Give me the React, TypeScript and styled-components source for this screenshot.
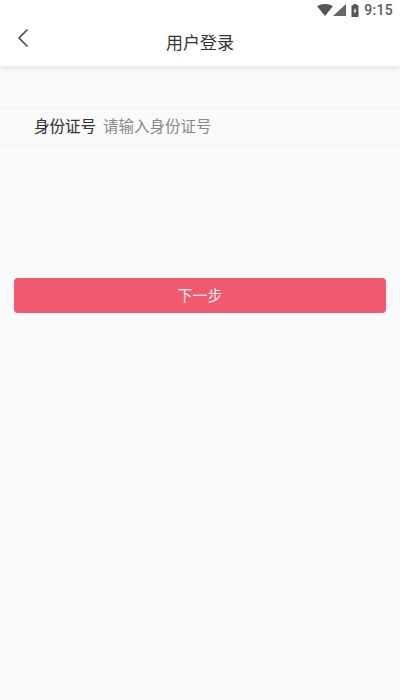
import * as React from "react";
import styled, { createGlobalStyle } from "styled-components";

const GlobalStyle = createGlobalStyle`
  html, body {
    margin: 0;
    padding: 0;
    background: #fafafa;
  }
  * {
    box-sizing: border-box;
  }
`;

const Page = styled.div`
  width: 400px;
  height: 700px;
  overflow: hidden;
  display: flex;
  flex-direction: column;
  background: #fafafa;
  font-family: "Roboto", "Noto Sans CJK SC", sans-serif;
`;

const Header = styled.header`
  background: #fff;
  height: 66px;
  box-shadow: 0 2px 6px rgba(0, 0, 0, 0.1);
  position: relative;
  z-index: 1;
`;

const StatusBar = styled.div`
  height: 20px;
  display: flex;
  align-items: center;
  justify-content: flex-end;
  padding-right: 7px;
  color: #555;
`;

const StatusIcon = styled.svg<{ $gap?: number }>`
  display: block;
  margin-left: ${(p) => p.$gap ?? 0}px;
`;

const Clock = styled.span`
  margin-left: 5px;
  font-size: 14px;
  font-weight: 500;
  letter-spacing: 0.3px;
  color: #5a5a5a;
`;

const NavBar = styled.div`
  height: 46px;
  display: grid;
  grid-template-columns: 46px 1fr 46px;
  align-items: center;
`;

const BackButton = styled.button`
  border: 0;
  padding: 0 0 10px 17px;
  background: none;
  display: flex;
`;

const Title = styled.h1`
  margin: 0;
  padding-bottom: 3px;
  text-align: center;
  font-size: 17px;
  font-weight: 400;
  color: #333;
`;

const Form = styled.div`
  margin-top: 41px;
`;

const Field = styled.label`
  height: 39px;
  display: flex;
  align-items: center;
  gap: 7px;
  padding-left: 34px;
  border-top: 1px solid #f2f2f2;
  border-bottom: 1px solid #f2f2f2;
`;

const FieldLabel = styled.span`
  font-size: 15.5px;
  line-height: 20px;
  margin-bottom: 0;
  color: #30343a;
  width: 62px;
  white-space: nowrap;
  -webkit-text-stroke: 0.1px #30343a;
`;

const FieldInput = styled.input`
  flex: 1;
  min-width: 0;
  border: 0;
  outline: 0;
  padding: 0;
  background: none;
  font: inherit;
  font-size: 15.5px;
  color: #333;
  &::placeholder {
    color: #83878e;
    opacity: 1;
  }
`;

const Actions = styled.div`
  padding: 132px 14px 0;
`;

const PrimaryButton = styled.button`
  width: 100%;
  height: 35px;
  padding: 0 0 3px;
  border: 0;
  border-radius: 4px;
  background: #f15a6e;
  color: #fdf0f2;
  font: inherit;
  font-size: 15px;
`;

export default function App(): React.ReactElement {
  return (
    <Page>
      <GlobalStyle />
      <Header>
        <StatusBar>
          <StatusIcon width="16" height="12" viewBox="0 0 17 13">
            <path d="M0 2.5C2.3 0.8 5.2 0 8.5 0S14.7 0.8 17 2.5L8.5 13Z" fill="#555" />
          </StatusIcon>
          <StatusIcon width="13" height="12" viewBox="0 0 13 12">
            <path d="M13 0V12H0Z" fill="#666" />
          </StatusIcon>
          <StatusIcon width="8" height="13" viewBox="0 0 8 13" $gap={5}>
            <path d="M2.5 0H5.5V1.2H7.5V13H0.5V1.2H2.5Z" fill="#555" />
            <path d="M4.4 3.5L2.5 7.5H3.8L3.4 10.5L5.5 6.3H4.2Z" fill="#fff" />
          </StatusIcon>
          <Clock>9:15</Clock>
        </StatusBar>
        <NavBar>
          <BackButton aria-label="back">
            <svg width="12" height="20" viewBox="0 0 12 20" fill="none">
              <path d="M10.5 1.5L2 10l8.5 8.5" stroke="#444" strokeWidth="1.5" />
            </svg>
          </BackButton>
          <Title>用户登录</Title>
        </NavBar>
      </Header>
      <Form>
        <Field>
          <FieldLabel>身份证号</FieldLabel>
          <FieldInput placeholder="请输入身份证号" />
        </Field>
      </Form>
      <Actions>
        <PrimaryButton>下一步</PrimaryButton>
      </Actions>
    </Page>
  );
}
